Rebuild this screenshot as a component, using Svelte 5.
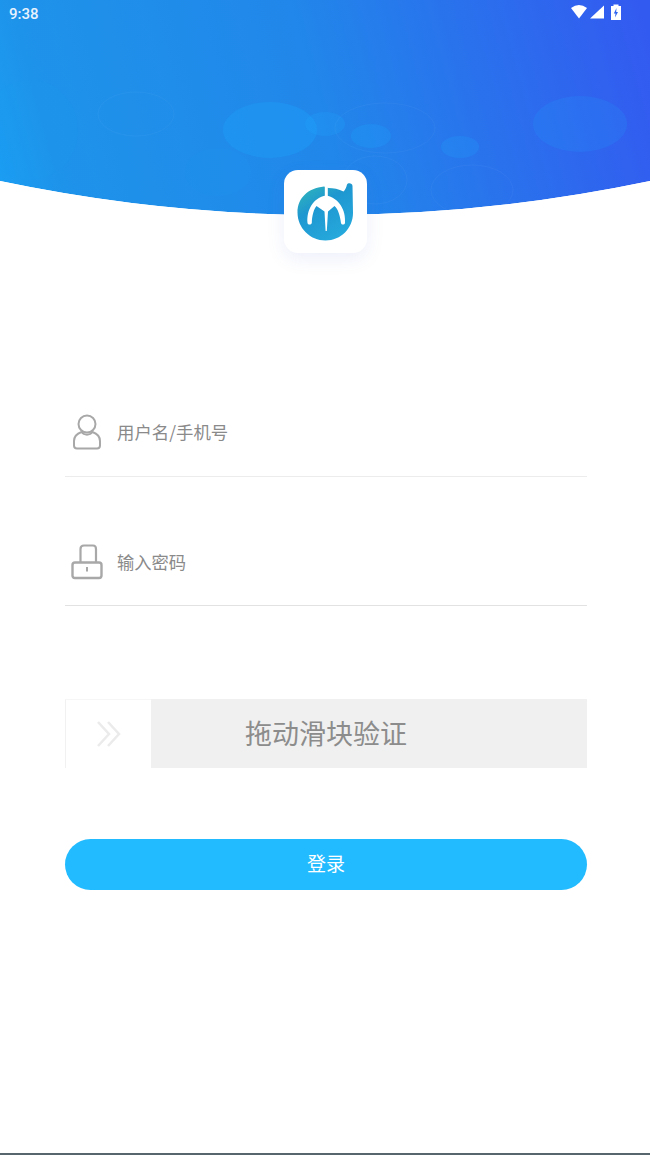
<script>
  const bubbles = [
    { cx: 270, cy: 130, rx: 47, ry: 28, o: 0.28 },
    { cx: 325, cy: 124, rx: 20, ry: 12, o: 0.22 },
    { cx: 371, cy: 136, rx: 20, ry: 12, o: 0.24 },
    { cx: 460, cy: 147, rx: 19, ry: 11, o: 0.2 },
    { cx: 580, cy: 124, rx: 47, ry: 28, o: 0.16 },
    { cx: 218, cy: 172, rx: 33, ry: 24, o: 0.08 },
    { cx: 30, cy: 130, rx: 48, ry: 50, o: 0.04 }
  ];
  const rings = [
    { cx: 136, cy: 114, rx: 38, ry: 22 },
    { cx: 385, cy: 128, rx: 50, ry: 25 },
    { cx: 472, cy: 190, rx: 41, ry: 25 },
    { cx: 375, cy: 180, rx: 32, ry: 24 }
  ];
</script>

<div class="page">
  <header class="top">
    <svg class="wave" viewBox="0 0 650 216" width="650" height="216" aria-hidden="true">
      <defs>
        <linearGradient id="sky" gradientUnits="userSpaceOnUse" x1="0" y1="220" x2="650" y2="40">
          <stop offset="0" stop-color="#1a9ff4" />
          <stop offset="0.1" stop-color="#1e93ea" />
          <stop offset="0.5" stop-color="#2187ea" />
          <stop offset="1" stop-color="#335af0" />
        </linearGradient>
      </defs>
      <path d="M0 0H650V181Q325 249 0 181Z" fill="url(#sky)" />
      {#each bubbles as b}
        <ellipse cx={b.cx} cy={b.cy} rx={b.rx} ry={b.ry} fill="#1ea8ff" opacity={b.o} />
      {/each}
      {#each rings as r}
        <ellipse cx={r.cx} cy={r.cy} rx={r.rx} ry={r.ry} fill="none" stroke="#fff" stroke-width="1" opacity="0.035" />
      {/each}
      <path d="M0 181Q325 249 650 181V216H0Z" fill="#fff" />
    </svg>

    <div class="status">
      <span class="time">9:38</span>
      <svg class="status-icons" width="50" height="16" viewBox="0 0 50 16" aria-hidden="true">
        <path d="M0 4Q8 -2 16 4L8 14.500Z" fill="#fff" />
        <path d="M19 14.500L33 1.500V14.500Z" fill="#fff" />
        <path d="M40 2H42.500V.5H47.500V2H50V16H40Z" fill="#fff" />
        <path d="M45.500 4L42.800 9.500H44.500L44 13.500L47 8H45.200Z" fill="#2e63ef" />
      </svg>
    </div>

    <div class="logo">
      <svg width="58" height="60" viewBox="0 0 58 60" aria-hidden="true">
        <defs>
          <linearGradient id="mark" x1="0" y1="0" x2="0.6" y2="1">
            <stop offset="0" stop-color="#36bcb6" />
            <stop offset="0.45" stop-color="#1e97d0" />
            <stop offset="1" stop-color="#25a8dc" />
          </linearGradient>
        </defs>
        <path d="M27 4.500C11 6 .5 16 .5 30.500C.5 46 13 58.500 28.500 58.500C44 58.500 56 46 56 31L55.500 4C55.500 1 51 .5 50 2.500C49.500 5 48 8 46.500 9.500C42 7 36 6 31.500 6Z" fill="url(#mark)" />
        <path d="M29.300 2V14" stroke="#fff" stroke-width="3" />
        <path d="M10.500 41C9.500 28 16 16 29 13.500C42 16 49 28 48 41C47.500 43 44.500 43 44 41C43 33 41 27 37.500 24L31 29.500L29.800 49H28.600L27.500 29.500L19.500 24C17 27 15 33 14.800 41C14 43 11 43 10.500 41Z" fill="#fff" />
      </svg>
    </div>
  </header>

  <main class="form">
    <label class="field user">
      <svg width="30" height="36" viewBox="0 0 30 36" aria-hidden="true">
        <circle cx="15" cy="10" r="8.500" fill="none" stroke="#a8a8a8" stroke-width="2" />
        <path d="M9.500 18C4 20 2 23 2 27V31.500C2 33.500 3 34.500 5 34.500H25C27 34.500 28 33.500 28 31.500V27C28 23 26 20 20.500 18C18 21.500 12 21.500 9.500 18Z" fill="none" stroke="#a8a8a8" stroke-width="2" stroke-linejoin="round" />
      </svg>
      <span>用户名/手机号</span>
    </label>

    <label class="field lock">
      <svg width="32" height="36" viewBox="0 0 32 36" aria-hidden="true">
        <path d="M9.500 18V5C9.500 2.500 11 1.500 13 1.500H22C24 1.500 25 2.500 25 5V18" fill="none" stroke="#a8a8a8" stroke-width="2.200" />
        <rect x="1.500" y="18.500" width="29" height="15.500" rx="2.500" fill="none" stroke="#a8a8a8" stroke-width="2.400" />
        <rect x="15" y="23" width="2" height="4.500" fill="#a8a8a8" />
      </svg>
      <span>输入密码</span>
    </label>

    <div class="slider">
      <div class="track">拖动滑块验证</div>
      <div class="handle">
        <svg width="26" height="28" viewBox="0 0 26 28" aria-hidden="true">
          <path d="M2 2L13 14L2 26M12 2L23 14L12 26" fill="none" stroke="#ebebeb" stroke-width="2.500" />
        </svg>
      </div>
    </div>

    <button class="submit" type="button">登录</button>
  </main>
</div>

<style>
  :global(body) {
    margin: 0;
    background: #fff;
  }

  .page {
    position: relative;
    display: flex;
    flex-direction: column;
    width: 650px;
    height: 1155px;
    box-sizing: border-box;
    overflow: hidden;
    background: #fff;
    border-bottom: 2px solid #56666c;
    font-family: "Noto Sans CJK SC", "Noto Sans", sans-serif;
  }

  .top {
    position: relative;
    height: 216px;
    flex: none;
  }

  .wave {
    display: block;
  }

  .status {
    position: absolute;
    top: 0;
    left: 9px;
    right: 0;
    height: 27px;
    display: flex;
    align-items: center;
    justify-content: space-between;
    color: #e8f2fe;
  }

  .time {
    font-family: Roboto, sans-serif;
    font-size: 15px;
    font-weight: 500;
  }

  .status-icons {
    margin: 0 29px 3px 0;
  }

  .logo {
    position: absolute;
    left: 284px;
    top: 170px;
    width: 83px;
    height: 83px;
    display: flex;
    align-items: center;
    justify-content: center;
    border-radius: 14px;
    background: #fff;
    box-shadow: 0 6px 18px rgba(90, 110, 220, 0.1);
  }

  .form {
    display: flex;
    flex-direction: column;
    padding: 0 63px 0 65px;
  }

  .field {
    display: flex;
    align-items: center;
    box-sizing: content-box;
    border-bottom: 1px solid #ececec;
    color: #8a8a8a;
    font-size: 17.3px;
  }

  .field svg {
    flex: none;
  }

  .user {
    margin-top: 190px;
    height: 52px;
    padding-bottom: 18px;
    font-size: 17.4px;
  }

  .user span {
    margin-bottom: 2px;
  }

  .user svg {
    margin: 0 15px 0 7px;
  }

  .lock {
    margin-top: 58px;
    height: 53px;
    padding-bottom: 17px;
    border-bottom-color: #e2e2e2;
  }

  .lock svg {
    margin: 0 14px 0 6px;
  }

  .slider {
    position: relative;
    margin-top: 93px;
    height: 69px;
    background: #f0f0f0;
  }

  .track {
    height: 100%;
    box-sizing: border-box;
    padding-bottom: 3px;
    display: flex;
    align-items: center;
    justify-content: center;
    color: #8c8c8c;
    font-size: 27px;
    line-height: 1;
  }

  .handle {
    position: absolute;
    top: 0;
    left: 0;
    width: 86px;
    height: 100%;
    box-sizing: border-box;
    display: flex;
    align-items: center;
    justify-content: center;
    background: #fff;
    border-left: 1px solid #f1f1f1;
    border-top: 1px solid #f6f6f6;
  }

  .submit {
    margin-top: 71px;
    height: 51px;
    padding: 0 0 5px;
    border: 0;
    border-radius: 26px;
    background: #22bbff;
    color: #fff;
    font: inherit;
    font-size: 19px;
  }
</style>
